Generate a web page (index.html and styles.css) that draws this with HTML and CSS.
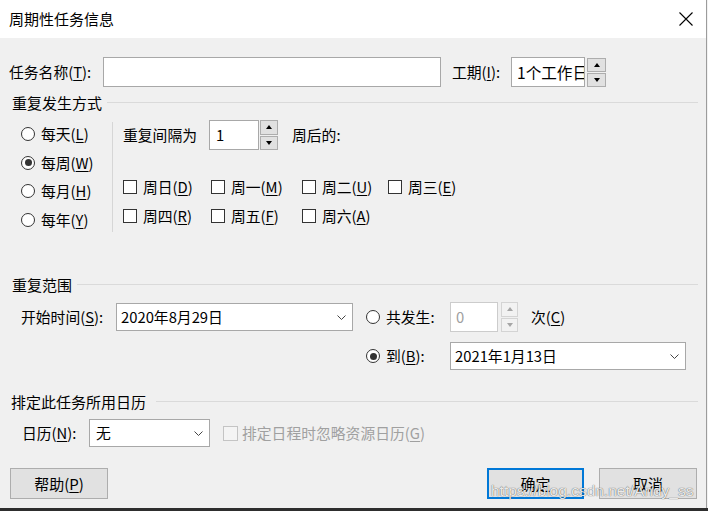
FILE: index.html
```html
<!DOCTYPE html>
<html lang="zh-CN">
<head>
<meta charset="utf-8">
<title>周期性任务信息</title>
<link rel="stylesheet" href="styles.css">
</head>
<body>
<div class="dialog">
  <div class="titlebar">
    <span class="title">周期性任务信息</span>
    <svg class="close" width="14" height="14" viewBox="0 0 14 14"><path d="M0.5 0.5L13.5 13.5M13.5 0.5L0.5 13.5" stroke="#000" stroke-width="1.1" fill="none"/></svg>
  </div>

  <div class="row task-row">
    <span class="lbl lbl-task">任务名称(<u>T</u>):</span>
    <div class="textbox tb-name"></div>
    <span class="lbl lbl-dur">工期(<u>I</u>):</span>
    <div class="textbox tb-dur">1个工作日</div>
    <div class="spin spin-dur"><span class="spin-btn up"></span><span class="spin-btn down"></span></div>
  </div>

  <div class="group-head"><span>重复发生方式</span><i class="rule"></i></div>
  <div class="recur">
    <div class="freq">
      <div class="opt"><span class="radio"></span>每天(<u>L</u>)</div>
      <div class="opt"><span class="radio checked"></span>每周(<u>W</u>)</div>
      <div class="opt"><span class="radio"></span>每月(<u>H</u>)</div>
      <div class="opt"><span class="radio"></span>每年(<u>Y</u>)</div>
    </div>
    <div class="sep"></div>
    <div class="weekly">
      <div class="interval">
        <span class="lbl lbl-int">重复间隔为</span>
        <div class="textbox tb-int">1</div>
        <div class="spin spin-int"><span class="spin-btn up"></span><span class="spin-btn down"></span></div>
        <span class="lbl lbl-after">周后的:</span>
      </div>
      <div class="days">
        <div class="check"><span class="box"></span>周日(<u>D</u>)</div>
        <div class="check"><span class="box"></span>周一(<u>M</u>)</div>
        <div class="check"><span class="box"></span>周二(<u>U</u>)</div>
        <div class="check"><span class="box"></span>周三(<u>E</u>)</div>
        <div class="check"><span class="box"></span>周四(<u>R</u>)</div>
        <div class="check"><span class="box"></span>周五(<u>F</u>)</div>
        <div class="check"><span class="box"></span>周六(<u>A</u>)</div>
      </div>
    </div>
  </div>

  <div class="group-head head-range"><span>重复范围</span><i class="rule"></i></div>
  <div class="row range-row1">
    <span class="lbl lbl-start">开始时间(<u>S</u>):</span>
    <div class="combo combo-start"><span>2020年8月29日</span><svg width="9" height="5" viewBox="0 0 9 5"><polyline points="0.5,0.5 4.5,4.5 8.5,0.5" fill="none" stroke="#444" stroke-width="1"/></svg></div>
    <div class="ropt"><span class="radio"></span>共发生:</div>
    <div class="textbox tb-count disabled">0</div>
    <div class="spin spin-count disabled"><span class="spin-btn up"></span><span class="spin-btn down"></span></div>
    <span class="lbl lbl-times">次(<u>C</u>)</span>
  </div>
  <div class="row range-row2">
    <div class="ropt"><span class="radio checked"></span>到(<u>B</u>):</div>
    <div class="combo combo-end"><span>2021年1月13日</span><svg width="9" height="5" viewBox="0 0 9 5"><polyline points="0.5,0.5 4.5,4.5 8.5,0.5" fill="none" stroke="#444" stroke-width="1"/></svg></div>
  </div>

  <div class="group-head head-cal"><span>排定此任务所用日历</span><i class="rule"></i></div>
  <div class="row cal-row">
    <span class="lbl lbl-cal">日历(<u>N</u>):</span>
    <div class="combo combo-cal"><span>无</span><svg width="9" height="5" viewBox="0 0 9 5"><polyline points="0.5,0.5 4.5,4.5 8.5,0.5" fill="none" stroke="#444" stroke-width="1"/></svg></div>
    <div class="check disabled"><span class="box"></span>排定日程时忽略资源日历(<u>G</u>)</div>
  </div>

  <div class="row btn-row">
    <div class="btn btn-help">帮助(<u>P</u>)</div>
    <div class="spacer"></div>
    <div class="btn btn-ok">确定</div>
    <div class="btn btn-cancel">取消</div>
  </div>

  <div class="watermark">https://blog.csdn.net/Andy_ss</div>
</div>
<div class="under"></div>
</body>
</html>
```

FILE: styles.css
```css
html, body {
  margin: 0;
  padding: 0;
  background: #f2f2f2;
}

body {
  font-family: "Noto Sans CJK SC", "Microsoft YaHei", sans-serif;
  font-size: 14.8px;
  line-height: 20px;
  color: #000;
}

u {
  text-decoration: underline;
  text-underline-offset: 2px;
}

.dialog {
  position: relative;
  width: 707px;
  height: 508px;
  box-sizing: border-box;
  background: #f0f0f0;
  border-right: 1px solid #9c9c9c;
  display: flex;
  flex-direction: column;
}

.under {
  height: 3px;
  background: #2e2e2e;
}

.titlebar {
  height: 38px;
  flex: none;
  background: #fff;
  display: flex;
  align-items: center;
  justify-content: space-between;
  padding: 0 13px 0 9px;
}

.title {
  font-size: 15px;
}

.close {
  display: block;
}

.row {
  display: flex;
  align-items: center;
  flex: none;
}

.lbl {
  white-space: nowrap;
  flex: none;
}

.textbox {
  box-sizing: border-box;
  border: 1px solid #a8a8a8;
  background: #fff;
  flex: none;
}

/* task name row */
.task-row {
  margin-top: 19px;
  height: 30px;
  padding-left: 9px;
}

.lbl-task { width: 94px; }

.tb-name {
  width: 338px;
  height: 30px;
}

.lbl-dur {
  margin-left: 11px;
  width: 59px;
}

.tb-dur {
  width: 74px;
  height: 30px;
  padding-left: 5px;
  line-height: 28px;
  font-size: 15.6px;
  white-space: nowrap;
  overflow: hidden;
}

/* spinners */
.spin {
  display: flex;
  flex-direction: column;
  gap: 1px;
  flex: none;
}

.spin-btn {
  flex: 1;
  box-sizing: border-box;
  border: 1px solid #adadad;
  background: #e1e1e1;
  display: flex;
  align-items: center;
  justify-content: center;
}

.spin-btn.up::after {
  content: "";
  border-left: 3.5px solid transparent;
  border-right: 3.5px solid transparent;
  border-bottom: 4px solid #000;
}

.spin-btn.down::after {
  content: "";
  border-left: 3.5px solid transparent;
  border-right: 3.5px solid transparent;
  border-top: 4px solid #000;
}

.spin-dur {
  margin-left: 2px;
  width: 19px;
  height: 29px;
}

.spin.disabled .spin-btn {
  border-color: #d4d4d4;
  background: #f2f2f2;
}

.spin.disabled .spin-btn.up::after { border-bottom-color: #a6a6a6; }
.spin.disabled .spin-btn.down::after { border-top-color: #a6a6a6; }

/* group headings */
.group-head {
  display: flex;
  align-items: center;
  height: 20px;
  flex: none;
  margin-top: 6px;
  padding: 0 8px 0 12px;
  font-size: 15px;
}

.rule {
  flex: 1;
  height: 1px;
  background: #dadada;
  margin-left: 5px;
  margin-top: -1px;
}

.head-range { margin-top: 41px; }
.head-cal {
  margin-top: 22px;
  padding-left: 11px;
}
.head-cal .rule { margin-left: 10px; }

/* recurrence pattern */
.recur {
  display: flex;
  height: 121px;
  flex: none;
}

.freq {
  width: 91px;
  padding-left: 21px;
  padding-top: 7px;
}

.opt {
  display: flex;
  align-items: center;
  height: 28.5px;
  white-space: nowrap;
}

.radio {
  position: relative;
  width: 14px;
  height: 14px;
  box-sizing: border-box;
  border: 1px solid #333;
  border-radius: 50%;
  background: #fff;
  margin-right: 6px;
  flex: none;
}

.radio.checked::after {
  content: "";
  position: absolute;
  left: 2.5px;
  top: 2.5px;
  width: 7px;
  height: 7px;
  border-radius: 50%;
  background: #333;
}

.sep {
  width: 1px;
  height: 110px;
  margin-top: 9px;
  background: #d6d6d6;
  flex: none;
}

.weekly {
  padding-left: 10px;
  padding-top: 7px;
}

.interval {
  display: flex;
  align-items: center;
  height: 30px;
}

.lbl-int { width: 86px; }

.tb-int {
  width: 50px;
  height: 30px;
  padding-left: 6px;
  line-height: 28px;
}

.spin-int {
  margin-left: 1px;
  width: 18px;
  height: 30px;
}

.lbl-after { margin-left: 14px; }

.days {
  display: grid;
  grid-template-columns: 88px 91px 86px auto;
  grid-auto-rows: 29px;
  margin-top: 22px;
}

.check {
  display: flex;
  align-items: center;
  white-space: nowrap;
}

.box {
  width: 14px;
  height: 14px;
  box-sizing: border-box;
  border: 1px solid #333;
  background: #fff;
  margin-right: 6px;
  flex: none;
}

/* range */
.range-row1 {
  margin-top: 7px;
  height: 30px;
  padding-left: 21px;
}

.lbl-start { width: 95px; }

.combo {
  box-sizing: border-box;
  height: 28px;
  border: 1px solid #a8a8a8;
  background: #fff;
  display: flex;
  align-items: center;
  justify-content: space-between;
  padding: 0 6px 0 4px;
  flex: none;
  white-space: nowrap;
}

.combo svg { display: block; }

.combo-start { width: 237px; }

.ropt {
  display: flex;
  align-items: center;
  width: 84px;
  flex: none;
  white-space: nowrap;
}

.range-row1 .ropt { margin-left: 13px; }

.tb-count {
  width: 48px;
  height: 30px;
  padding-left: 5px;
  line-height: 28px;
}

.textbox.disabled {
  border-color: #cccccc;
  color: #a0a0a0;
}

.spin-count {
  margin-left: 3px;
  width: 17px;
  height: 30px;
}

.lbl-times { margin-left: 13px; }

.range-row2 {
  margin-top: 10px;
  height: 28px;
  padding-left: 366px;
}

.combo-end { width: 236px; }

/* calendar */
.cal-row {
  margin-top: 7px;
  height: 28px;
  padding-left: 22px;
}

.lbl-cal { width: 67px; }

.combo-cal {
  width: 121px;
  padding-left: 6px;
}

.check.disabled {
  margin-left: 13px;
  color: #a0a0a0;
}

.check.disabled .box {
  width: 15px;
  height: 15px;
  border-color: #c4c4c4;
  background: #f4f4f4;
  margin-right: 4px;
}

/* buttons */
.btn-row {
  margin-top: 21px;
  height: 31px;
  padding: 0 9px 0 10px;
}

.spacer { flex: 1; }

.btn {
  box-sizing: border-box;
  height: 31px;
  border: 1px solid #adadad;
  background: #e1e1e1;
  display: flex;
  align-items: center;
  justify-content: center;
  flex: none;
  font-size: 15px;
}

.btn-help { width: 98px; }

.btn-ok {
  width: 97px;
  border: 2px solid #0078d7;
}

.btn-cancel {
  width: 98px;
  margin-left: 15px;
}

/* watermark overlay */
.watermark {
  position: absolute;
  left: 491px;
  top: 482px;
  font-family: "Liberation Sans", Arial, sans-serif;
  font-size: 15.5px;
  line-height: 18px;
  color: rgba(255, 255, 255, 0.9);
  text-shadow: 0 0 1px rgba(0, 0, 0, 0.6), 0 0 1px rgba(0, 0, 0, 0.3);
  white-space: nowrap;
  pointer-events: none;
}
```
